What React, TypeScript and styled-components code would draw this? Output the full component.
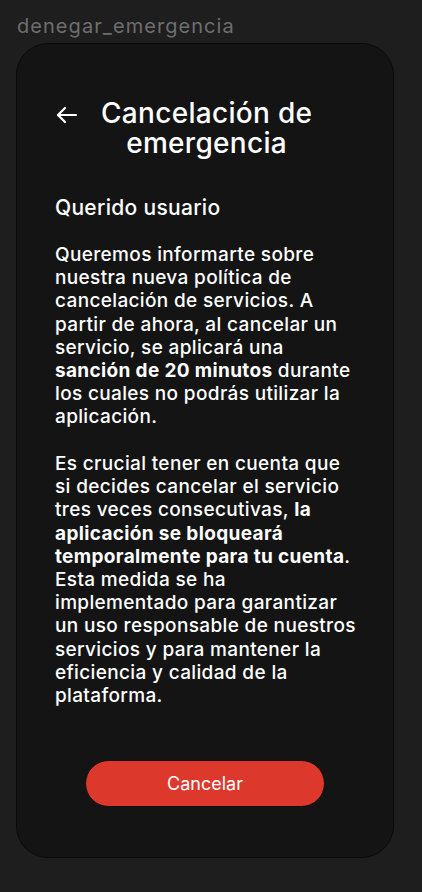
import React from "react";
import styled, { createGlobalStyle } from "styled-components";

const Global = createGlobalStyle`
  html, body { margin: 0; padding: 0; background: #1e1e1e; }
  body { font-family: Inter, "Noto Sans", sans-serif; -webkit-font-smoothing: antialiased; }
`;

const Page = styled.div`
  width: 422px;
  height: 892px;
  background: #1e1e1e;
  padding: 13px 0 0 16px;
  box-sizing: border-box;
  display: flex;
  flex-direction: column;
`;

const Label = styled.div`
  font-size: 20px;
  line-height: 26px;
  letter-spacing: 1.05px;
  color: #6e6e6e;
  padding-left: 1px;
  margin-bottom: 4px;
`;

const Frame = styled.div`
  width: 378px;
  height: 815px;
  box-sizing: border-box;
  background: #141414;
  border: 1px solid #0a0a0a;
  border-radius: 32px;
  display: flex;
  flex-direction: column;
  padding: 54px 30px 50px 38px;
`;

const Header = styled.div`
  display: flex;
  align-items: flex-start;
  gap: 22px;
`;

const Back = styled.svg`
  width: 24px;
  height: 24px;
  margin-top: 5px;
  flex-shrink: 0;
`;

const Title = styled.h1`
  margin: 0;
  font-size: 28px;
  line-height: 30px;
  font-weight: 500;
  letter-spacing: 0.3px;
  color: #ffffff;
  text-align: center;
`;

const Greeting = styled.h2`
  margin: 37px 0 0;
  font-size: 21px;
  line-height: 26px;
  font-weight: 500;
  letter-spacing: 0.3px;
  color: #ffffff;
`;

const Body = styled.p`
  margin: 22px 0 0;
  font-size: 19px;
  line-height: 23.2px;
  font-weight: 500;
  letter-spacing: 0.35px;
  color: #ffffff;
  white-space: nowrap;
  & + & { margin-top: 23.4px; }
  b { font-weight: 700; }
`;

const Button = styled.button`
  margin: auto 0 0 30px;
  width: 240px;
  height: 47px;
  border-radius: 24px;
  background: #dc382c;
  border: 1px solid #0e0e0e;
  color: #ffffff;
  font-family: Inter, "Noto Sans", sans-serif;
  font-size: 18px;
  font-weight: 400;
  cursor: pointer;
`;

const para1 = [
  "Queremos informarte sobre",
  "nuestra nueva política de",
  "cancelación de servicios. A",
  "partir de ahora, al cancelar un",
  "servicio, se aplicará una",
];

const para2 = [
  "Es crucial tener en cuenta que",
  "si decides cancelar el servicio",
];

const para2b = [
  "Esta medida se ha",
  "implementado para garantizar",
  "un uso responsable de nuestros",
  "servicios y para mantener la",
  "eficiencia y calidad de la",
  "plataforma.",
];

export default function App() {
  return (
    <>
      <Global />
      <Page>
        <Label>denegar_emergencia</Label>
        <Frame>
          <Header>
            <Back viewBox="0 0 24 24" fill="none" stroke="#fff" strokeWidth="2.2" strokeLinecap="round" strokeLinejoin="round">
              <path d="M21 12H3" />
              <path d="M10 5l-7 7 7 7" />
            </Back>
            <Title>Cancelación de<br />emergencia</Title>
          </Header>
          <Greeting>Querido usuario</Greeting>
          <Body>
            {para1.map((l) => (
              <React.Fragment key={l}>{l}<br /></React.Fragment>
            ))}
            <b>sanción de 20 minutos</b> durante<br />
            los cuales no podrás utilizar la<br />
            aplicación.
          </Body>
          <Body>
            {para2.map((l) => (
              <React.Fragment key={l}>{l}<br /></React.Fragment>
            ))}
            tres veces consecutivas, <b>la</b><br />
            <b>aplicación se bloqueará</b><br />
            <b>temporalmente para tu cuenta</b>.<br />
            {para2b.map((l, i) => (
              <React.Fragment key={l}>{l}{i < para2b.length - 1 && <br />}</React.Fragment>
            ))}
          </Body>
          <Button>Cancelar</Button>
        </Frame>
      </Page>
    </>
  );
}
